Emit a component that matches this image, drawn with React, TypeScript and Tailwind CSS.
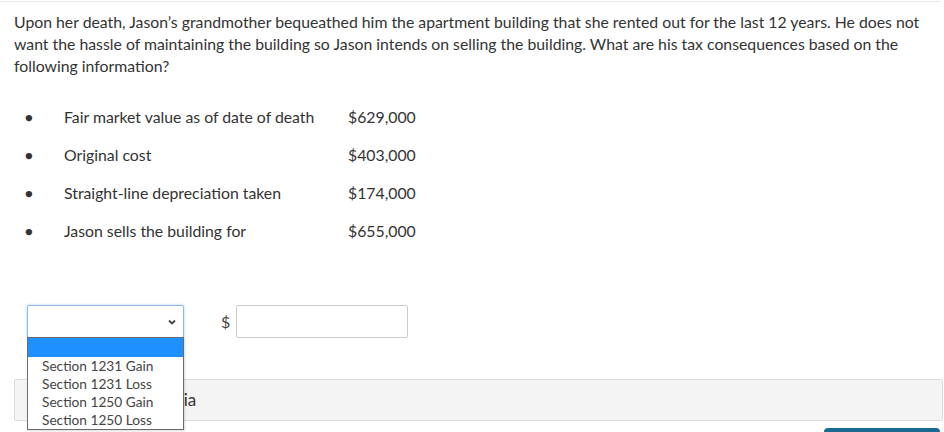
const facts = [
  { label: 'Fair market value as of date of death', value: '$629,000' },
  { label: 'Original cost', value: '$403,000' },
  { label: 'Straight-line depreciation taken', value: '$174,000' },
  { label: 'Jason sells the building for', value: '$655,000' },
];

const options = ['Section 1231 Gain', 'Section 1231 Loss', 'Section 1250 Gain', 'Section 1250 Loss'];

export default function App() {
  return (
    <div className="w-[944px] h-[432px] overflow-hidden bg-white text-[#333] font-['Lato',_'Liberation_Sans',_sans-serif]">
      <div className="border-t border-[#e6e6e6] mt-px mr-[4px]" />
      <div className="px-[14px] pt-[9px]">
        <p className="text-[15.8px] leading-[22px] w-[920px]">
          Upon her death, Jason’s grandmother bequeathed him the apartment building that she rented out for the last 12 years. He does not
          want the hassle of maintaining the building so Jason intends on selling the building. What are his tax consequences based on the
          following information?
        </p>

        <ul className="mt-[29px] flex flex-col gap-[16px] text-[15.8px] leading-[22px]">
          {facts.map((f) => (
            <li key={f.label} className="flex items-center">
              <span className="w-[50px] pl-[11px] text-[13px] text-[#333]">●</span>
              <span className="w-[284px]">{f.label}</span>
              <span>{f.value}</span>
            </li>
          ))}
        </ul>

        <div className="mt-[63px] flex items-center">
          <div className="relative ml-[13px] w-[157px]">
            <div className="h-[33px] border border-[#8fb8e6] rounded-[2px] shadow-[0_0_3px_rgba(100,160,230,0.5)] flex items-center justify-end pr-[6px] bg-white">
              <svg width="10" height="10" viewBox="0 0 10 10" className="text-[#444]">
                <path d="M2 3.5 L5 6.5 L8 3.5" fill="none" stroke="currentColor" strokeWidth="1.8" />
              </svg>
            </div>
            <div className="absolute left-0 top-[32px] w-[157px] border border-[#6b6b6b] bg-white z-10 shadow-[1px_1px_2px_rgba(0,0,0,0.15)]">
              <div className="h-[19px] bg-[#1e90ff]" />
              {options.map((o) => (
                <div key={o} className="h-[18px] leading-[18px] pl-[14px] text-[13.7px] text-[#444]">
                  {o}
                </div>
              ))}
            </div>
          </div>
          <span className="ml-[37px] text-[16px] text-[#444]">$</span>
          <div className="ml-[6px] w-[172px] h-[33px] border border-[#ccc] rounded-[2px] bg-white" />
        </div>

        <div className="mt-[41px] h-[42px] border border-[#dcdcdc] bg-[#f4f4f4] rounded-[2px] flex items-center mr-[-13px]">
          <span className="ml-[126px] text-[17px] text-[#333]">Criteria</span>
        </div>
      </div>
      <div className="flex justify-end pr-[4px] mt-[7px]">
        <div className="w-[116px] h-[10px] bg-[#1a6a93] rounded-t-[4px]" />
      </div>
    </div>
  );
}
